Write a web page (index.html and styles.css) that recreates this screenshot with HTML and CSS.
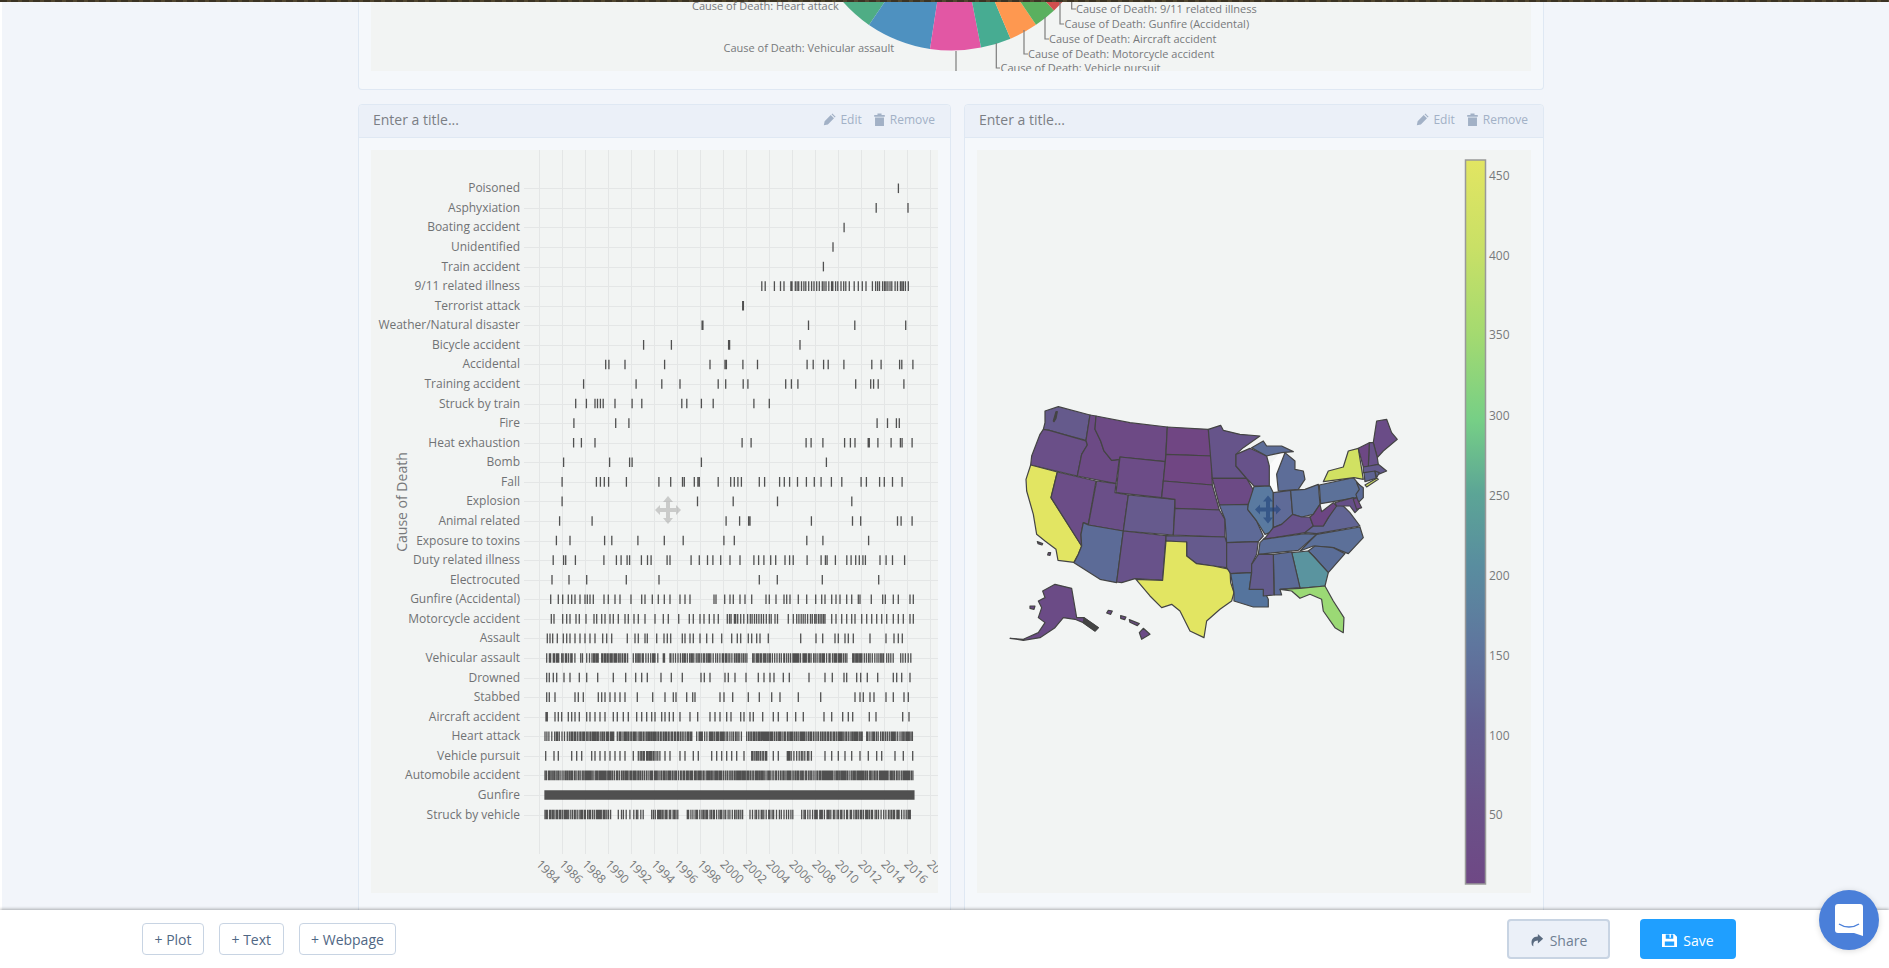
FILE: index.html
```html
<!DOCTYPE html>
<html lang="en">
<head>
    <meta charset="UTF-8">
    <title>Dashboard</title>
    <link rel="stylesheet" href="styles.css">
</head>
<body>
    <div class="app">
        <div class="top-strip"></div>
        <main class="canvas">
            <section class="card card-pie">
                <div class="plot plot-pie">
                    <svg class="chart" width="1160" height="69" viewBox="371 2 1160 69">
                        <path d="M952.5 -98L835 -8A148.5 148.5 0 0 0 869 25Z" fill="#4fad85"/>
                        <path d="M952.5 -98L869 25A148.5 148.5 0 0 0 930 49Z" fill="#4e91c0"/>
                        <path d="M952.5 -98L930 49A148.5 148.5 0 0 0 981 47.6Z" fill="#e257a4"/>
                        <path d="M952.5 -98L981 47.6A148.5 148.5 0 0 0 1010.5 38.7Z" fill="#47ac92"/>
                        <path d="M952.5 -98L1010.5 38.7A148.5 148.5 0 0 0 1036 24.8Z" fill="#fe9850"/>
                        <path d="M952.5 -98L1036 24.8A148.5 148.5 0 0 0 1054 10.4Z" fill="#5ab05f"/>
                        <path d="M952.5 -98L1054 10.4A148.5 148.5 0 0 0 1066 -2.2Z" fill="#d14e4e"/>
                        <path class="leader" d="M956 51V71M996.3 43V68H1000M1024 30V54H1028M1045 17V39H1049M1060 2V24H1064M1071.7 2V9H1076"/>
                        <text class="pie-label" x="692" y="10">Cause of Death: Heart attack</text>
                        <text class="pie-label" x="723.5" y="52">Cause of Death: Vehicular assault</text>
                        <text class="pie-label" x="1076" y="13">Cause of Death: 9/11 related illness</text>
                        <text class="pie-label" x="1064.5" y="28">Cause of Death: Gunfire (Accidental)</text>
                        <text class="pie-label" x="1049" y="43">Cause of Death: Aircraft accident</text>
                        <text class="pie-label" x="1028" y="58">Cause of Death: Motorcycle accident</text>
                        <text class="pie-label" x="1000.5" y="72">Cause of Death: Vehicle pursuit</text>
                    </svg>
                </div>
            </section>

            <div class="card-row">
                <section class="card">
                    <header class="card-header">
                        <span class="card-title">Enter a title...</span>
                        <div class="card-actions">
                            <span class="action">
                                <svg class="icon" viewBox="0 0 16 16"><path d="M1 15l1-5 7.500-7.500 4 4L6 14zM10.500 1.500l1-1 4 4-1 1z"/></svg>
                                Edit
                            </span>
                            <span class="action">
                                <svg class="icon" viewBox="0 0 16 16"><path d="M1.500 2.500h13V4.500h-13zM5.500 0.500h5v2h-5zM2.500 5.500h11V16h-11z"/></svg>
                                Remove
                            </span>
                        </div>
                    </header>
                    <div class="card-body">
                        <div class="plot">
                            <svg class="chart" id="rug-plot" width="567" height="743" viewBox="371 149 567 743"></svg>
                        </div>
                    </div>
                </section>

                <section class="card">
                    <header class="card-header">
                        <span class="card-title">Enter a title...</span>
                        <div class="card-actions">
                            <span class="action">
                                <svg class="icon" viewBox="0 0 16 16"><path d="M1 15l1-5 7.500-7.500 4 4L6 14zM10.500 1.500l1-1 4 4-1 1z"/></svg>
                                Edit
                            </span>
                            <span class="action">
                                <svg class="icon" viewBox="0 0 16 16"><path d="M1.500 2.500h13V4.500h-13zM5.500 0.500h5v2h-5zM2.500 5.500h11V16h-11z"/></svg>
                                Remove
                            </span>
                        </div>
                    </header>
                    <div class="card-body">
                        <div class="plot">
                            <svg class="chart" width="554" height="743" viewBox="977 149 554 743">
                                <defs>
                                    <linearGradient id="viridis" x1="0" y1="0" x2="0" y2="1">
                                        <stop offset="0" stop-color="#e2e562"/>
                                        <stop offset="0.12" stop-color="#c9e066"/>
                                        <stop offset="0.24" stop-color="#a4da70"/>
                                        <stop offset="0.36" stop-color="#76cf86"/>
                                        <stop offset="0.46" stop-color="#5ca596"/>
                                        <stop offset="0.56" stop-color="#598d9f"/>
                                        <stop offset="0.67" stop-color="#5f769e"/>
                                        <stop offset="0.78" stop-color="#635f92"/>
                                        <stop offset="0.89" stop-color="#6a5289"/>
                                        <stop offset="1" stop-color="#6f4885"/>
                                    </linearGradient>
                                </defs>

                                <g class="map" transform="translate(980 390) scale(0.3333)">
                                    <polygon class="lake" points="866,225 900,185 915,185 895,250 895,305 870,305"/>
                                    <polygon fill="#655a8c" points="195,60 235,47 330,72 318,148 250,130 208,118 190,115 195,95"/>
                                    <polygon fill="#444444" points="228,62 232,62 228,82 222,92 220,90"/>
                                    <polygon fill="#6a4f88" points="190,115 208,118 250,130 318,150 322,162 305,190 292,255 152,222 155,195 180,130"/>
                                    <polygon fill="#e2e562" points="152,222 232,243 213,320 305,465 295,490 282,514 234,508 228,475 195,450 170,430 160,370 140,300 138,265"/>
                                    <polygon fill="#6b4d87" points="232,243 348,270 325,400 310,395 303,430 305,465 213,320"/>
                                    <polygon fill="#6c4a85" points="330,72 348,75 345,115 362,150 372,180 395,208 418,205 408,278 292,255 305,190 322,162 318,148"/>
                                    <polygon fill="#6d4a85" points="348,75 450,95 562,108 556,212 420,198 418,205 395,208 372,180 362,150 345,115"/>
                                    <polygon fill="#6c4c87" points="420,198 556,212 545,320 408,305"/>
                                    <polygon fill="#6a4f88" points="350,270 408,278 405,305 445,312 430,420 325,402"/>
                                    <polygon fill="#665a8d" points="445,312 585,325 580,432 430,420"/>
                                    <polygon fill="#5c6b97" points="325,402 430,420 410,575 360,565 282,515 295,490 305,465 303,430 310,395"/>
                                    <polygon fill="#68528a" points="430,420 558,434 548,568 465,563 425,575 410,573"/>
                                    <polygon fill="#704683" points="562,108 685,115 695,195 558,190"/>
                                    <polygon fill="#704683" points="558,190 695,195 697,282 550,270"/>
                                    <polygon fill="#6d4b85" points="550,270 697,282 718,357 585,352 585,325 545,320"/>
                                    <polygon fill="#69558b" points="585,352 718,357 735,385 735,438 580,432"/>
                                    <polygon fill="#655a8d" points="558,434 735,438 740,455 740,530 700,525 650,518 620,495 620,453 558,450"/>
                                    <polygon fill="#e2e562" points="558,450 620,453 620,495 650,518 700,525 750,535 752,575 762,605 755,630 720,655 680,690 672,740 630,720 600,660 575,640 545,650 510,615 468,565 548,568"/>
                                    <polygon fill="#66548a" points="685,115 722,103 730,118 780,130 840,135 790,170 768,190 768,225 800,262 697,262"/>
                                    <polygon fill="#6c4a85" points="697,262 800,262 822,300 805,340 718,342"/>
                                    <polygon fill="#5e6a97" points="718,342 805,340 803,355 830,390 850,435 835,452 740,455 735,385"/>
                                    <polygon fill="#645c8e" points="740,455 835,452 830,490 815,520 815,545 752,548 740,530"/>
                                    <polygon fill="#55749d" points="752,548 815,545 808,595 850,595 865,625 865,648 820,648 762,630 762,605"/>
                                    <polygon fill="#67528a" points="768,190 810,172 860,195 868,225 868,285 822,285 800,262 768,225"/>
                                    <polygon fill="#5a7aa0" points="822,287 870,285 880,305 880,410 870,425 855,430 830,390 803,355 805,340"/>
                                    <polygon fill="#5f6b98" points="880,305 932,298 938,370 905,400 880,410"/>
                                    <polygon fill="#5d6d98" points="815,170 850,150 860,165 905,165 940,182 905,185 880,190 860,195"/>
                                    <polygon fill="#5d6d98" points="895,300 890,250 915,185 945,210 945,235 970,240 975,265 955,295"/>
                                    <polygon fill="#5c7099" points="932,298 975,295 1015,280 1020,340 1000,370 965,378 938,370"/>
                                    <polygon fill="#67528a" points="858,438 880,410 905,400 938,370 965,378 990,378 1000,405 975,425 850,445"/>
                                    <polygon fill="#5c7199" points="1018,282 1120,260 1145,290 1130,320 1022,338"/>
                                    <polygon fill="#626594" points="975,425 1000,405 1030,405 1045,380 1065,340 1090,345 1110,365 1140,405 1010,428"/>
                                    <polygon fill="#6c4683" points="990,378 1000,370 1020,340 1025,362 1060,335 1070,345 1045,380 1030,405 1000,405"/>
                                    <polygon fill="#d1e162" points="1030,272 1045,240 1090,228 1105,180 1135,172 1150,265 1122,260"/>
                                    <polygon fill="#d1e162" points="1155,282 1190,262 1195,265 1160,288"/>
                                    <polygon fill="#5c7099" points="960,480 1010,430 1140,408 1150,440 1105,488 1060,470 1000,465"/>
                                    <polygon fill="#5c6e98" points="840,455 850,445 975,428 1010,430 965,470 955,478 835,490"/>
                                    <polygon fill="#5a6d97" points="985,480 1005,465 1060,470 1095,488 1045,545 1000,495"/>
                                    <polygon fill="#5a949f" points="935,485 985,480 1000,495 1045,545 1035,585 960,592"/>
                                    <polygon fill="#5c6b97" points="880,490 935,483 960,590 900,595 905,612 883,612"/>
                                    <polygon fill="#635c8e" points="835,490 880,490 882,612 850,615 850,595 808,595 815,545 815,520"/>
                                    <polygon fill="#9bd975" points="900,595 960,592 1035,585 1060,630 1092,680 1090,725 1065,710 1030,660 1025,625 990,610 960,622 935,600"/>
                                    <polygon fill="#6a4c87" points="1180,155 1190,90 1220,85 1235,125 1252,145 1210,180 1192,200"/>
                                    <polygon fill="#68528a" points="1168,155 1180,155 1192,200 1195,220 1165,228"/>
                                    <polygon fill="#6d4884" points="1135,172 1168,155 1165,228 1150,228"/>
                                    <polygon fill="#635a8d" points="1150,228 1195,220 1220,240 1195,250 1150,245"/>
                                    <polygon fill="#5f6492" points="1152,245 1185,240 1188,262 1155,272"/>
                                    <polygon fill="#5f6492" points="1185,240 1198,245 1190,260"/>
                                    <polygon fill="#5b6b97" points="1130,275 1150,290 1150,320 1135,335 1128,310 1138,295"/>
                                    <polygon fill="#654f88" points="1065,335 1120,320 1135,355 1125,365 1110,345 1090,345 1070,345"/>
                                    <polygon fill="#6d4884" points="1120,325 1130,320 1145,350 1130,355"/>
                                    <polygon fill="#6b4b86" points="188,600 225,580 275,592 290,680 312,680 355,710 345,720 310,695 285,685 250,680 225,710 180,740 130,748 90,742 130,745 175,725 195,695 175,680 185,650 175,630 195,620"/>
                                    <polygon fill="#6b4b86" points="490,712 510,730 485,745 478,725"/>
                                    <polygon fill="#6b4b86" points="385,658 397,660 392,670 380,666"/>
                                    <polygon fill="#6b4b86" points="422,674 438,678 434,686 422,682"/>
                                    <polygon fill="#6b4b86" points="448,686 478,698 472,704 450,694"/>
                                    <polygon fill="#444444" points="312,680 355,710 345,720 310,695"/>
                                    <polygon fill="#6b4b86" points="172,452 188,458 186,462 174,458"/>
                                    <polygon fill="#6b4b86" points="205,485 212,485 210,493 203,492"/>
                                    <polygon fill="#6b4b86" points="150,645 165,645 162,655 150,652"/>
                                </g>

                                <path class="move-dark" d="M1268 494.500l5 6h-3v6h6v-3l5 5-5 5v-3h-6v6h3l-5 6-5-6h3v-6h-6v3l-5-5 5-5v3h6v-6h-3z"/>

                                <rect class="colorbar" x="1465.500" y="159" width="20" height="724" fill="url(#viridis)"/>
                                <text class="tick-label" x="1489" y="178.500">450</text>
                                <text class="tick-label" x="1489" y="258.500">400</text>
                                <text class="tick-label" x="1489" y="338">350</text>
                                <text class="tick-label" x="1489" y="418.500">300</text>
                                <text class="tick-label" x="1489" y="498.500">250</text>
                                <text class="tick-label" x="1489" y="578.500">200</text>
                                <text class="tick-label" x="1489" y="658.500">150</text>
                                <text class="tick-label" x="1489" y="738.500">100</text>
                                <text class="tick-label" x="1489" y="817.500">50</text>
                            </svg>
                        </div>
                    </div>
                </section>
            </div>
        </main>

        <footer class="toolbar">
            <div class="toolbar-group">
                <button class="btn">+ Plot</button>
                <button class="btn">+ Text</button>
                <button class="btn">+ Webpage</button>
            </div>
            <div class="toolbar-group toolbar-save">
                <button class="btn-share">
                    <svg class="icon-share" viewBox="0 0 16 16"><path d="M15 6.500L9 1v3C3.500 4 1 7.500 2 13c0 .8 1 1.500 2 2-.8-3 .5-6.500 5-6.500V12z"/></svg>
                    Share
                </button>
                <button class="btn-save">
                    <svg class="icon-save" viewBox="0 0 16 16"><path fill-rule="evenodd" d="M0 1h13l3 3v11H0zM4 1.500v4.500h8V1.500H9.500V5H8V1.500zM3 9v4.500h10V9z"/></svg>
                    Save
                </button>
            </div>
        </footer>

        <div class="chat-bubble">
            <svg class="chat-icon" viewBox="0 0 28 32">
                <path class="chat-shape" d="M3 0h22a3 3 0 0 1 3 3v29l-9-3H3a3 3 0 0 1-3-3V3a3 3 0 0 1 3-3z"/>
                <path class="chat-smile" d="M4 20c6 4 14 4 20 0"/>
            </svg>
        </div>
    </div>
    <script src="script.js"></script>
</body>
</html>
```

FILE: styles.css
```css
* {
    box-sizing: border-box;
}
body {
    font-family: "Open Sans", sans-serif;
    background-color: white;
    margin: 0;
    padding: 0;
}
.app {
    display: flex;
    flex-direction: column;
    height: 100vh;
    overflow: hidden;
    position: relative;
}
.top-strip {
    height: 2px;
    flex: none;
    background: repeating-linear-gradient(90deg, #3b3324, #3b3324 7px, #51462f 7px, #51462f 11px);
}
.canvas {
    flex: 1;
    min-height: 0;
    overflow: hidden;
    margin-left: 2px;
    padding-left: 356px;
    background-color: #f2f5fa;
}
.card {
    background-color: #f5f8fb;
    border: 1px solid #dfe8f3;
    border-radius: 4px;
}
.card-pie {
    width: 1186px;
    height: 88px;
    padding: 0 12px;
    border-top: none;
    border-radius: 0 0 4px 4px;
}
.card-row {
    display: grid;
    grid-template-columns: 593px 580px;
    gap: 13px;
    margin-top: 14px;
}
.card-header {
    display: flex;
    justify-content: space-between;
    align-items: center;
    height: 33px;
    padding: 0 15px 4px 14px;
    background-color: #ebf0f8;
    border-bottom: 1px solid #dfe8f3;
    border-radius: 4px 4px 0 0;
}
.card-title {
    font-size: 14px;
    color: #7b7f85;
}
.card-actions {
    display: flex;
    gap: 11px;
}
.action {
    display: flex;
    align-items: center;
    gap: 4px;
    font-size: 12px;
    color: #a2b1c6;
}
.icon {
    width: 13px;
    height: 13px;
    fill: #a2b1c6;
}
.card-body {
    padding: 12px 12px 40px;
}
.plot {
    background-color: #f2f4f3;
    height: 743px;
}
.plot-pie {
    height: 69px;
}
.chart {
    display: block;
    font-family: "Open Sans", sans-serif;
}
.leader {
    fill: none;
    stroke: #7d7d7d;
    stroke-width: 1.2;
}
.pie-label {
    font-size: 11px;
    fill: #77797b;
}
.grid-line {
    stroke: #e4e6e6;
    stroke-width: 1;
}
.rug {
    stroke: #505050;
    stroke-width: 1.300;
    fill: none;
}
.row-label {
    font-size: 12px;
    fill: #707274;
    text-anchor: end;
}
.axis-title {
    font-size: 14px;
    fill: #77797b;
    text-anchor: middle;
}
.year-label,
.tick-label {
    font-size: 12px;
    fill: #77797b;
}
.move-light {
    fill: #9a9a9a;
    opacity: 0.45;
}
.move-dark {
    fill: #1e3f78;
    opacity: 0.6;
}
.map polygon {
    stroke: #444;
    stroke-width: 3.600;
    stroke-linejoin: round;
}
.map .lake {
    fill: #fbfbfb;
    stroke: none;
}
.colorbar {
    stroke: #999;
    stroke-width: 1.500;
}
.toolbar {
    flex: none;
    height: 58px;
    display: flex;
    justify-content: space-between;
    align-items: center;
    padding: 0 153px 0 142px;
    background-color: white;
    box-shadow: 0 -1px 3px rgba(0, 0, 0, 0.3);
    position: relative;
}
.toolbar-group {
    display: flex;
    align-items: center;
    gap: 15px;
}
.toolbar-save {
    gap: 30px;
}
.btn {
    height: 32px;
    padding: 1px 11.500px 0;
    font-family: inherit;
    font-size: 14px;
    color: #506784;
    background-color: white;
    border: 1px solid #c8d4e3;
    border-radius: 4px;
}
.btn-share,
.btn-save {
    display: flex;
    align-items: center;
    justify-content: center;
    gap: 6px;
    height: 40px;
    padding-top: 3px;
    font-family: inherit;
    font-size: 14px;
    border-radius: 4px;
}
.btn-share {
    width: 103px;
    color: #6f7f93;
    background-color: #ebf0f8;
    border: 2px solid #c8d4e3;
}
.btn-save {
    width: 96px;
    color: white;
    background-color: #1f9fff;
    border: none;
}
.icon-share {
    width: 14px;
    height: 14px;
    fill: #5a6b80;
}
.icon-save {
    width: 15px;
    height: 15px;
    fill: white;
}
.chat-bubble {
    position: absolute;
    right: 10px;
    bottom: 18px;
    width: 60px;
    height: 60px;
    display: flex;
    align-items: center;
    justify-content: center;
    border-radius: 50%;
    background-color: #4a7fd9;
    box-shadow: 0 1px 6px rgba(0, 0, 0, 0.15);
}
.chat-icon {
    width: 28px;
    height: 32px;
}
.chat-shape {
    fill: white;
}
.chat-smile {
    fill: none;
    stroke: #4a7fd9;
    stroke-width: 1.500;
}
```

FILE: script.js
```js
// rug plot: deaths per cause, one tick per event
const SVG_NS = "http://www.w3.org/2000/svg";
const svg = document.getElementById("rug-plot");

const FIRST_ROW_Y = 187.3;
const ROW_STEP = 19.57;
const LABEL_X = 520;

// tick lists were read off at different widths, these bring them back to page x
const upper = (v) => v / 2.613 + 350;
const middle = (v) => v / 2.8 + 370;
const lower = (v) => v / 3 + 530;

const rows = [
    { label: "Poisoned", at: upper, ticks: [1433] },
    { label: "Asphyxiation", at: upper, ticks: [1375, 1458] },
    { label: "Boating accident", at: upper, ticks: [1291] },
    { label: "Unidentified", at: upper, ticks: [1262] },
    { label: "Train accident", at: upper, ticks: [1237] },
    { label: "9/11 related illness", at: upper, ticks: [1076, 1085, 1109, 1125, 1134], runs: [[1152, 1285, 6], [1290, 1360, 9], [1365, 1440, 6], [1442, 1462, 7]] },
    { label: "Terrorist attack", at: upper, ticks: [1026, 1028] },
    { label: "Weather/Natural disaster", at: upper, ticks: [920, 922, 1198, 1319, 1452] },
    { label: "Bicycle accident", at: middle, ticks: [766, 844, 1004, 1007, 1204] },
    { label: "Accidental", at: middle, ticks: [660, 669, 714, 825, 952, 994, 998, 1044, 1085, 1224, 1241, 1270, 1283, 1327, 1405, 1431, 1483, 1489, 1520] },
    { label: "Training accident", at: middle, ticks: [598, 745, 817, 868, 975, 996, 1045, 1058, 1164, 1180, 1198, 1360, 1402, 1410, 1423, 1495] },
    { label: "Struck by train", at: middle, ticks: [576, 606, 630, 637, 645, 653, 686, 734, 761, 873, 887, 928, 961, 1075, 1118] },
    { label: "Fire", at: middle, ticks: [571, 688, 725, 1420, 1449, 1474, 1482] },
    { label: "Heat exhaustion", at: middle, ticks: [570, 592, 630, 1042, 1067, 1221, 1235, 1268, 1329, 1345, 1358, 1395, 1398, 1422, 1459, 1485, 1490, 1518] },
    { label: "Bomb", at: middle, ticks: [542, 671, 727, 734, 928, 1278] },
    { label: "Fall", at: middle, ticks: [538, 634, 645, 656, 668, 718, 809, 842, 875, 880, 908, 918, 922, 975, 1010, 1020, 1030, 1040, 1090, 1105, 1147, 1160, 1175, 1197, 1222, 1244, 1263, 1292, 1321, 1375, 1390, 1427, 1440, 1463, 1490] },
    { label: "Explosion", at: middle, ticks: [538, 917, 1017, 1141, 1349] },
    { label: "Animal related", at: middle, ticks: [531, 622, 997, 1035, 1060, 1064, 1236, 1351, 1374, 1477, 1487, 1518] },
    { label: "Exposure to toxins", at: middle, ticks: [522, 560, 657, 677, 750, 824, 877, 991, 1020, 1223, 1268, 1396] },
    { label: "Duty related illness", at: middle, ticks: [513, 542, 548, 575, 655, 690, 703, 720, 727, 760, 777, 787, 832, 840, 899, 922, 945, 960, 982, 1008, 1036, 1075, 1088, 1103, 1122, 1136, 1162, 1175, 1185, 1224, 1263, 1275, 1280, 1303, 1335, 1347, 1360, 1370, 1380, 1387, 1428, 1445, 1463, 1497] },
    { label: "Electrocuted", at: lower, ticks: [66, 117, 170, 289, 387, 688, 742, 877, 1046] },
    { label: "Gunfire (Accidental)", at: lower, ticks: [62, 85, 98, 115, 125, 135, 150, 165, 172, 180, 190, 222, 235, 255, 270, 303, 335, 345, 367, 385, 403, 420, 450, 465, 480, 552, 558, 584, 600, 610, 630, 645, 665, 708, 718, 738, 762, 770, 780, 805, 830, 857, 875, 885, 905, 918, 930, 950, 965, 985, 990, 1024, 1058, 1066, 1090, 1105, 1140, 1150] },
    { label: "Motorcycle accident", at: lower, ticks: [64, 72, 98, 110, 120, 138, 148, 168, 192, 200, 215, 225, 240, 250, 265, 285, 295, 312, 325, 345, 375, 400, 415, 446, 478, 490, 510, 522, 538, 552, 565, 775, 790, 885, 905, 918, 935, 950, 965, 975, 995, 1010, 1025, 1040, 1055, 1070, 1090, 1105, 1120, 1140, 1150], runs: [[592, 625, 7], [632, 745, 8], [800, 888, 6]] },
    { label: "Assault", at: lower, ticks: [52, 60, 68, 82, 100, 110, 120, 135, 150, 165, 180, 195, 218, 230, 245, 292, 315, 325, 345, 352, 380, 402, 412, 422, 457, 465, 480, 490, 510, 530, 548, 575, 605, 622, 632, 655, 665, 680, 690, 715, 812, 858, 878, 915, 925, 945, 955, 970, 1020, 1068, 1092, 1105, 1117] },
    { label: "Vehicular assault", at: lower, runs: [[50, 135, 6], [152, 160, 4], [170, 205, 6], [215, 295, 4], [310, 385, 6], [400, 407, 3], [420, 655, 5], [668, 955, 5], [968, 1062, 5], [1070, 1095, 6], [1112, 1150, 6]] },
    { label: "Drowned", at: lower, ticks: [50, 58, 70, 80, 102, 120, 148, 170, 203, 250, 287, 317, 335, 352, 393, 424, 457, 513, 523, 540, 585, 595, 615, 648, 685, 702, 720, 732, 760, 778, 837, 885, 907, 942, 950, 980, 992, 1012, 1043, 1090, 1100, 1115, 1140] },
    { label: "Stabbed", at: lower, ticks: [50, 58, 75, 135, 145, 160, 205, 215, 225, 240, 255, 270, 285, 322, 368, 405, 430, 438, 470, 488, 495, 570, 582, 608, 655, 688, 725, 750, 805, 872, 975, 990, 1000, 1020, 1032, 1068, 1090, 1122, 1135] },
    { label: "Aircraft accident", at: lower, ticks: [48, 52, 75, 85, 95, 115, 125, 135, 148, 170, 180, 195, 210, 225, 250, 262, 280, 295, 320, 335, 350, 365, 375, 395, 405, 418, 430, 450, 480, 503, 540, 555, 570, 590, 603, 632, 642, 660, 670, 698, 730, 745, 772, 797, 820, 882, 905, 938, 955, 968, 1018, 1038, 1118, 1137] },
    { label: "Heart attack", at: lower, runs: [[45, 105, 6], [112, 255, 4], [262, 490, 4], [500, 640, 5], [650, 1000, 4], [1010, 1150, 5]] },
    { label: "Vehicle pursuit", at: lower, ticks: [47, 72, 85, 125, 140, 155, 185, 195, 210, 225, 240, 255, 270, 285, 310, 405, 420, 450, 465, 490, 505, 545, 560, 575, 590, 605, 620, 642, 730, 745, 885, 905, 925, 945, 965, 990, 1015, 1040, 1055, 1095, 1120, 1148], runs: [[325, 390, 5], [665, 715, 4], [772, 845, 6]] },
    { label: "Automobile accident", at: lower, runs: [[45, 1152, 4]] },
    { label: "Gunfire", at: lower, runs: [[45, 1152, 1.200]] },
    { label: "Struck by vehicle", at: lower, runs: [[45, 245, 4.500], [265, 345, 8], [365, 445, 5.500], [472, 640, 5], [660, 795, 6], [815, 1143, 5.500]] },
];

const el = (name, attrs, text) => {
    const node = document.createElementNS(SVG_NS, name);
    for (const key in attrs) node.setAttribute(key, attrs[key]);
    if (text) node.textContent = text;
    svg.appendChild(node);
    return node;
};

// small repeatable generator so the dense rows do not change between loads
let seed = 7;
const rand = () => {
    seed = (seed * 16807) % 2147483647;
    return seed / 2147483647;
};

// grid
let gridPath = "";
for (let x = 539.5; x < 938; x += 23) gridPath += `M${x} 149V853`;
rows.forEach((row, i) => {
    gridPath += `M524 ${Math.round(FIRST_ROW_Y + i * ROW_STEP) + 0.5}H938`;
});
el("path", { class: "grid-line", d: gridPath, fill: "none" });

// ticks and labels
rows.forEach((row, i) => {
    const y = FIRST_ROW_Y + i * ROW_STEP;
    const xs = (row.ticks || []).slice();
    (row.runs || []).forEach(([from, to, gap]) => {
        for (let v = from; v < to; v += gap * (0.5 + rand())) xs.push(v);
    });
    const d = xs.map((v) => `M${row.at(v).toFixed(1)} ${y - 4.8}v9.600`).join("");
    el("path", { class: "rug", d: d });
    el("text", { class: "row-label", x: LABEL_X, y: y + 4 }, row.label);
});

// x axis, rotated years
for (let year = 1984; year <= 2018; year += 2) {
    const x = 535.5 + ((year - 1984) / 2) * 23;
    el("text", { class: "year-label", x: x, y: 864, transform: `rotate(45 ${x} 864)` }, String(year));
}

el("text", { class: "axis-title", x: 407, y: 501, transform: "rotate(-90 407 501)" }, "Cause of Death");

// drag handle over the chart
el("path", {
    class: "move-light",
    d: "M668 495l5 6h-3v6h6v-3l5 5-5 5v-3h-6v6h3l-5 6-5-6h3v-6h-6v3l-5-5 5-5v3h6v-6h-3z",
});
```
